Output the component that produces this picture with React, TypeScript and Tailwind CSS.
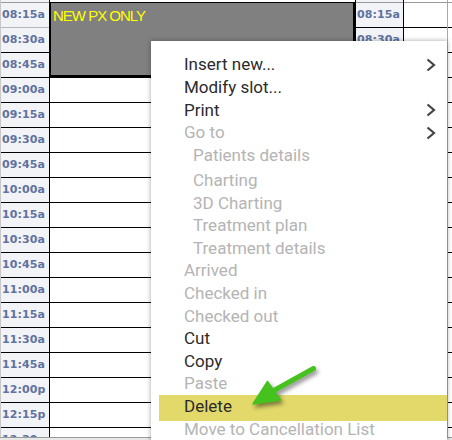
import React from 'react';

const times = [
  '08:15a', '08:30a', '08:45a', '09:00a', '09:15a', '09:30a', '09:45a', '10:00a', '10:15a',
  '10:30a', '10:45a', '11:00a', '11:15a', '11:30a', '11:45a', '12:00p', '12:15p', '12:30p',
];

type Item = { label: string; enabled?: boolean; sub?: boolean; indent?: boolean; active?: boolean };

const menu: Item[] = [
  { label: 'Insert new...', enabled: true, sub: true },
  { label: 'Modify slot...', enabled: true },
  { label: 'Print', enabled: true, sub: true },
  { label: 'Go to', sub: true },
  { label: 'Patients details', indent: true },
  { label: 'Charting', indent: true },
  { label: '3D Charting', indent: true },
  { label: 'Treatment plan', indent: true },
  { label: 'Treatment details', indent: true },
  { label: 'Arrived' },
  { label: 'Checked in' },
  { label: 'Checked out' },
  { label: 'Cut', enabled: true },
  { label: 'Copy', enabled: true },
  { label: 'Paste' },
  { label: 'Delete', enabled: true, active: true },
  { label: 'Move to Cancellation List' },
];

const Chevron = () => (
  <svg width="10" height="14" viewBox="0 0 10 14" className="shrink-0">
    <path d="M1.5 1.5 L8 7 L1.5 12.5" fill="none" stroke="#444" strokeWidth="2.2" />
  </svg>
);

const TimeCol = ({ second }: { second?: boolean }) => (
  <div
    className={`flex flex-col shrink-0 bg-[#f2f3f6] border-r border-black ${
      second ? 'w-[48px]' : 'w-[50px] border-l border-l-[#c8c8c8]'
    }`}
  >
    <div className="h-[2px] shrink-0" />
    {times.map((t, i) => (
      <div
        key={t}
        className={`h-[25px] shrink-0 flex items-center pl-[1px] border-t ${
          i === 0 ? 'border-[#9a9a9a]' : i === 1 && !second ? 'border-[#b8b8b8]' : 'border-black'
        } font-['DejaVu_Sans',sans-serif] font-bold text-[11px] tracking-[0.1px] text-[#5f72a0]`}
      >
        {t}
      </div>
    ))}
  </div>
);

const PlainCol = ({ className }: { className: string }) => (
  <div className={`flex flex-col ${className}`}>
    <div className="h-[2px] shrink-0" />
    {times.map((t, i) => (
      <div key={t} className={`h-[25px] shrink-0 border-t ${i === 0 ? 'border-[#9a9a9a]' : 'border-black'}`} />
    ))}
  </div>
);

const App: React.FC = () => {
  return (
    <div className="relative w-[452px] h-[440px] overflow-hidden bg-white">
      <div className="flex h-[437px] overflow-hidden">
        <TimeCol />
        {/* main column with the appointment */}
        <div className="flex flex-col shrink-0 w-[306px] border-r border-black">
          <div className="h-[2px] shrink-0" />
          <div className="h-[75px] shrink-0 bg-[#808080] border-t border-l border-black border-r-2 border-b-2 pl-[2px] pt-[4.5px]">
            <span className="block font-['Liberation_Sans',Arial,sans-serif] text-[15px] leading-[16px] tracking-[-1px] text-[#ffff00]">
              NEW PX ONLY
            </span>
          </div>
          {times.slice(3).map((t) => (
            <div key={t} className="h-[25px] shrink-0 border-t border-black" />
          ))}
        </div>
        <TimeCol second />
        <PlainCol className="w-[44px] shrink-0 border-r border-[#a8a8a8]" />
        <PlainCol className="flex-1" />
      </div>
      <div className="h-[3px] border-t border-[#9a9a9a] bg-[#e8e8e8]" />

      {/* context menu */}
      <div className="absolute left-[151px] top-[41px] w-[296px] h-[420px] bg-white pl-[8px] pt-[12.6px] shadow-[0_0_5px_rgba(0,0,0,0.35)] font-['Roboto',sans-serif] text-[17px]">
        {menu.map((m, i) => (
          <div
            key={m.label}
            className={`flex items-center justify-between pr-[11px] whitespace-nowrap ${
              m.active
                ? 'h-[25.8px] pb-[3.2px] -mb-[3.2px] bg-[#e2d96a]'
                : i < 5
                  ? 'h-[22.75px]'
                  : 'h-[22.6px]'
            } ${i === 5 ? 'mt-[2.2px]' : ''} ${m.indent ? 'pl-[34px]' : 'pl-[25px]'} ${
              m.enabled ? 'text-[#2b2b2b]' : 'text-[#b4b4b4]'
            }`}
          >
            <span>{m.label}</span>
            {m.sub && <Chevron />}
          </div>
        ))}
      </div>

      {/* green pointer arrow */}
      <svg
        className="absolute left-[240px] top-[355px] w-[90px] h-[60px] drop-shadow-[2px_3px_2px_rgba(0,0,0,0.45)]"
        viewBox="0 0 90 60"
      >
        <line x1="73.5" y1="13.5" x2="33" y2="36" stroke="#46c21e" strokeWidth="5" strokeLinecap="round" />
        <polygon points="13,49 27.5,26.5 40.5,45" fill="#46c21e" stroke="#46c21e" strokeWidth="1.5" strokeLinejoin="round" />
      </svg>
    </div>
  );
};

export default App;
